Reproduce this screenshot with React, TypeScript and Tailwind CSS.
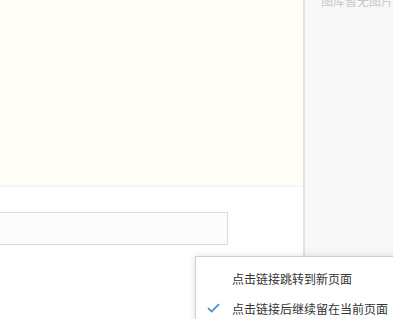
import React from 'react';

const font = { fontFamily: '"Noto Sans CJK SC", "Noto Sans", sans-serif' };

const App: React.FC = () => {
  return (
    <div className="relative w-[393px] h-[319px] overflow-hidden bg-white" style={font}>
      <div className="flex h-full">
        {/* Editor column */}
        <div className="w-[306px] flex flex-col border-r-2 border-[#e2e2e2]">
          <div className="h-[187px] bg-[#fffef6] border-b border-[#f1f1ec]" />
          <div className="bg-white flex-1 pt-[25px]">
            <div className="w-[228px] h-[33px] border border-l-0 border-[#dcdcdc] bg-[#fbfbfb]" />
          </div>
        </div>

        {/* Side panel */}
        <div className="flex-1 bg-[#f8f8f8]">
          <p className="mt-[-7px] pl-[16px] text-[12px] leading-[16px] text-[#c8c8c8] whitespace-nowrap">
            图库暂无图片
          </p>
        </div>
      </div>

      {/* Link behaviour dropdown */}
      <div className="absolute left-[195px] top-[256px] w-[220px] h-[90px] bg-white border border-[#cfcfcf] shadow-[0_0_8px_rgba(0,0,0,0.12)]">
        <div className="flex items-center h-[30px] mt-[7px] pl-[36px] text-[12px] text-[#333] whitespace-nowrap">
          点击链接跳转到新页面
        </div>
        <div className="relative flex items-center h-[30px] pl-[36px] text-[12px] text-[#333] whitespace-nowrap">
          <svg className="absolute left-[11px] top-[9px]" width="13" height="10" viewBox="0 0 13 10">
            <path d="M1 5.2 L4.6 8.6 L12 1.2" fill="none" stroke="#4a8fcc" strokeWidth="1.8" />
          </svg>
          点击链接后继续留在当前页面
        </div>
      </div>
    </div>
  );
};

export default App;
